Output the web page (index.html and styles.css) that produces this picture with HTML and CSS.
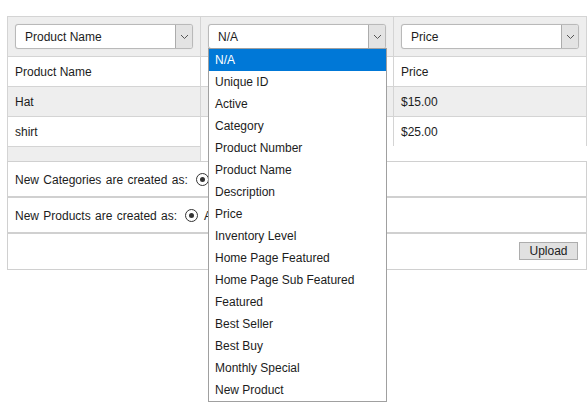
FILE: index.html
```html
<!DOCTYPE html>
<html>
<head>
<meta charset="utf-8">
<link rel="stylesheet" href="styles.css">
</head>
<body>
<div class="page">
  <div class="grid">
    <div class="cell head">
      <div class="select"><span class="sel-text">Product Name</span><span class="arrow"><svg width="9" height="6" viewBox="0 0 9 6"><polyline points="1,1 4.5,4.5 8,1" fill="none" stroke="#555" stroke-width="1"/></svg></span></div>
    </div>
    <div class="cell head has-menu">
      <div class="select"><span class="sel-text">N/A</span><span class="arrow"><svg width="9" height="6" viewBox="0 0 9 6"><polyline points="1,1 4.5,4.5 8,1" fill="none" stroke="#555" stroke-width="1"/></svg></span></div>
      <ul class="menu">
        <li class="active">N/A</li>
        <li>Unique ID</li>
        <li>Active</li>
        <li>Category</li>
        <li>Product Number</li>
        <li>Product Name</li>
        <li>Description</li>
        <li>Price</li>
        <li>Inventory Level</li>
        <li>Home Page Featured</li>
        <li>Home Page Sub Featured</li>
        <li>Featured</li>
        <li>Best Seller</li>
        <li>Best Buy</li>
        <li>Monthly Special</li>
        <li>New Product</li>
      </ul>
    </div>
    <div class="cell head last">
      <div class="select"><span class="sel-text">Price</span><span class="arrow"><svg width="9" height="6" viewBox="0 0 9 6"><polyline points="1,1 4.5,4.5 8,1" fill="none" stroke="#555" stroke-width="1"/></svg></span></div>
    </div>

    <div class="cell row">Product Name</div>
    <div class="cell row"></div>
    <div class="cell row last">Price</div>

    <div class="cell row alt">Hat</div>
    <div class="cell row alt"></div>
    <div class="cell row alt last">$15.00</div>

    <div class="cell row">shirt</div>
    <div class="cell row"></div>
    <div class="cell row last">$25.00</div>

    <div class="cell strip"></div>
    <div class="cell strip2"></div>
    <div class="strip3"></div>
  </div>

  <div class="opt">
    <span class="label">New Categories are created as:</span>
    <span class="radio"></span>
    <span class="hidden-label">Active</span>
  </div>
  <div class="opt">
    <span class="label">New Products are created as:</span>
    <span class="radio"></span>
    <span class="hidden-label">Active</span>
  </div>
  <div class="opt opt-last">
    <button class="upload">Upload</button>
  </div>
</div>
</body>
</html>
```

FILE: styles.css
```css
* { box-sizing: border-box; }
html, body { margin: 0; padding: 0; background: #fff; }
body {
  font-family: "Liberation Sans", Arial, sans-serif;
  font-size: 12px;
  color: #1c1c1c;
  min-height: 409px;
}
.page {
  margin: 16px 0 0 7px;
  width: 580px;
  min-height: 393px;
  position: relative;
}
.grid {
  display: grid;
  grid-template-columns: 193px 193px 194px;
  position: relative;
  z-index: 2;
}
.cell {
  border-top: 1px solid #d4d4d4;
  border-left: 1px solid #d4d4d4;
}
.cell.last { border-right: 1px solid #d4d4d4; }
.head {
  height: 40px;
  background: #eeeeee;
  padding: 7px 0 0 7px;
}
.has-menu { position: relative; }
.select {
  display: flex;
  width: 178px;
  height: 25px;
  border: 1px solid #b9b9b9;
  border-radius: 3px;
  background: #fff;
  box-shadow: 0 0 1px rgba(0,0,0,0.15);
}
.sel-text {
  flex: 1;
  padding-left: 9px;
  line-height: 25px;
  font-size: 12px;
}
.arrow {
  width: 17px;
  height: 23px;
  background: #e3e3e3;
  border-left: 1px solid #acacac;
  border-radius: 0 2px 2px 0;
  display: flex;
  align-items: center;
  justify-content: center;
}
.menu {
  position: absolute;
  left: 7px;
  top: 31px;
  width: 179px;
  margin: 0;
  padding: 0;
  list-style: none;
  background: #fff;
  border: 1px solid #a0a0a0;
  z-index: 5;
}
.menu li {
  height: 22px;
  line-height: 23px;
  padding-left: 6px;
  white-space: nowrap;
}
.menu li.active {
  background: #0078d7;
  color: #fff;
}
.row {
  height: 30px;
  line-height: 31px;
  padding-left: 7px;
}
.alt { background: #eeeeee; }
.strip {
  height: 15px;
  background: #eeeeee;
}
.strip2 {
  height: 15px;
  border-top: none;
}
.opt {
  display: flex;
  align-items: center;
  height: 36px;
  border: 1px solid #d0d0d0;
  padding: 1px 0 0 7px;
  width: 580px;
  position: relative;
  z-index: 1;
}
.label { word-spacing: 1px; }
.radio {
  display: inline-block;
  width: 13px;
  height: 13px;
  border: 1px solid #333;
  border-radius: 50%;
  margin: 0 6px 0 8px;
  position: relative;
  background: #fff;
}
.radio::after {
  content: "";
  position: absolute;
  left: 3px;
  top: 3px;
  width: 5px;
  height: 5px;
  border-radius: 50%;
  background: #333;
}
.opt-last {
  height: 37px;
  justify-content: flex-end;
  padding: 0 8px 1px 0;
}
.upload {
  width: 59px;
  height: 18px;
  padding: 0;
  font-family: "Liberation Sans", Arial, sans-serif;
  font-size: 12px;
  color: #1c1c1c;
  background: #e1e1e1;
  border: 1px solid #adadad;
  border-radius: 0;
}
```
